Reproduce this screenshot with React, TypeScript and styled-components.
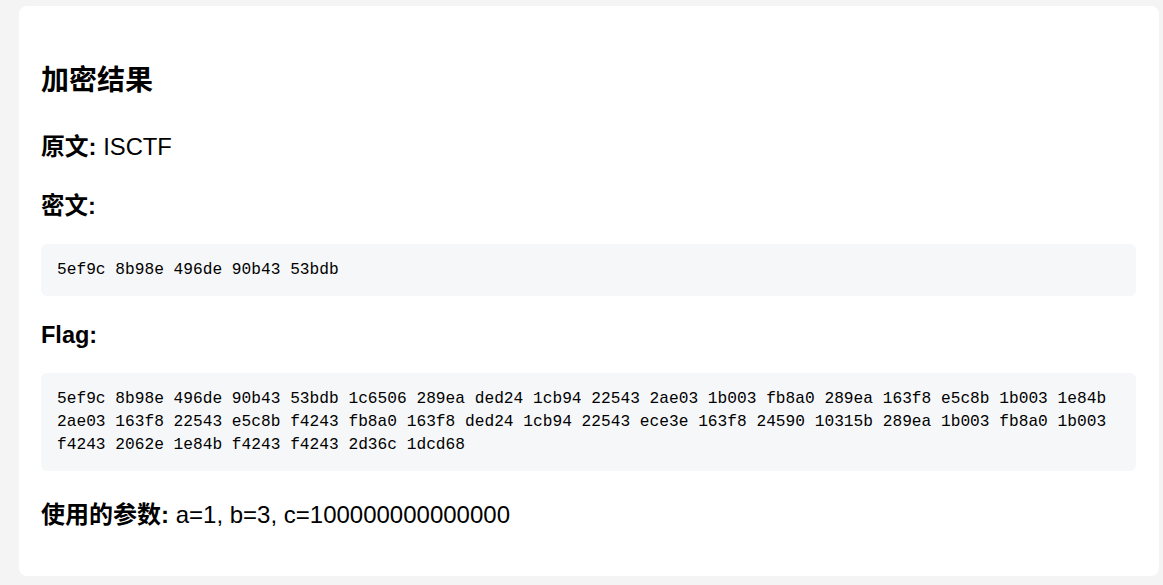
import React from "react";
import styled, { createGlobalStyle } from "styled-components";

const GlobalStyle = createGlobalStyle`
  html, body {
    margin: 0;
    padding: 0;
    background: #f4f4f4;
  }
  body {
    font-family: "Liberation Sans", Arial, "Noto Sans CJK SC", sans-serif;
    color: #000;
  }
`;

const Page = styled.div`
  padding: 6px 4px 8px 19px;
`;

const Card = styled.div`
  background: #fff;
  border-radius: 8px;
  padding: 28px 23px 47px 22px;
  display: flex;
  flex-direction: column;
`;

const Title = styled.h2`
  margin: 30px 0 0 0;
  font-size: 28px;
  line-height: 34px;
  font-weight: bold;
`;

const Field = styled.p<{ $size?: number; $gap: number }>`
  margin: ${(p) => p.$gap}px 0 0 0;
  font-size: ${(p) => p.$size ?? 23.8}px;
  line-height: 28px;

  strong {
    font-weight: bold;
  }
`;

const SectionLabel = styled.h3<{ $gap: number }>`
  margin: ${(p) => p.$gap}px 0 0 0;
  font-size: 23.5px;
  line-height: 28px;
  font-weight: bold;
`;

const CodeBlock = styled.pre<{ $gap: number }>`
  margin: ${(p) => p.$gap}px 0 0 0;
  padding: 14.5px 16px;
  background: #f6f7f9;
  border-radius: 6px;
  font-family: "Liberation Mono", "Courier New", monospace;
  font-size: 16.2px;
  line-height: 23px;
  white-space: pre-wrap;
  word-break: normal;
  color: #000;
`;

const cipher = "5ef9c 8b98e 496de 90b43 53bdb";

const flag =
  "5ef9c 8b98e 496de 90b43 53bdb 1c6506 289ea ded24 1cb94 22543 2ae03 1b003 fb8a0 289ea 163f8 e5c8b 1b003 1e84b 2ae03 163f8 22543 e5c8b f4243 fb8a0 163f8 ded24 1cb94 22543 ece3e 163f8 24590 10315b 289ea 1b003 fb8a0 1b003 f4243 2062e 1e84b f4243 f4243 2d36c 1dcd68";

const App: React.FC = () => {
  return (
    <>
      <GlobalStyle />
      <Page>
        <Card>
          <Title>加密结果</Title>
          <Field $gap={35}>
            <strong>原文:</strong> ISCTF
          </Field>
          <SectionLabel $gap={31}>密文:</SectionLabel>
          <CodeBlock $gap={24}>{cipher}</CodeBlock>
          <SectionLabel $gap={25}>Flag:</SectionLabel>
          <CodeBlock $gap={24}>{flag}</CodeBlock>
          <Field $gap={30} $size={24}>
            <strong>使用的参数:</strong> a=1, b=3, c=100000000000000
          </Field>
        </Card>
      </Page>
    </>
  );
};

export default App;
